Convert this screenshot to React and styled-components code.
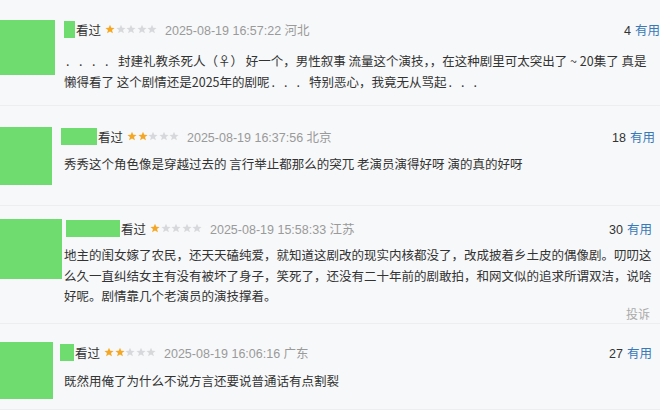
import React from 'react';
import styled, { createGlobalStyle } from 'styled-components';

const GlobalStyle = createGlobalStyle`
  html, body {
    margin: 0;
    padding: 0;
    background: #f7f8f9;
  }
  body {
    width: 660px;
    height: 410px;
    overflow: hidden;
    font-family: "Liberation Sans", "Noto Sans CJK SC", sans-serif;
    color: #333;
  }
`;

const StyledList = styled.div`
  width: 660px;
  height: 410px;
  overflow: hidden;
`;

const StyledComment = styled.div`
  display: grid;
  grid-template-columns: 64px 1fr;
  height: ${({ $h }) => $h}px;
  padding-top: ${({ $top }) => $top}px;
  box-sizing: border-box;
  border-bottom: 1px solid #eceef0;
`;

const Avatar = styled.div`
  width: ${({ $w }) => $w}px;
  height: ${({ $h }) => $h}px;
  margin-top: ${({ $mt }) => $mt || 0}px;
  background: #6edc6e;
`;

const Content = styled.div`
  display: flex;
  flex-direction: column;
  gap: ${({ $gap }) => $gap}px;
  min-width: 0;
`;

const Header = styled.div`
  display: flex;
  align-items: center;
  height: 18px;
  font-size: 12.5px;
  margin-right: ${({ $mr }) => $mr}px;
  white-space: nowrap;
`;

const NameBlock = styled.span`
  display: block;
  width: ${({ $w }) => $w}px;
  height: 17px;
  margin-left: ${({ $ml }) => $ml || 0}px;
  background: #6edc6e;
`;

const Watched = styled.span`
  margin-left: 1px;
  color: #333;
`;

const Stars = styled.span`
  display: flex;
  gap: 0.5px;
  margin-left: 4px;
`;

const DateText = styled.span`
  margin-left: 8px;
  color: #9a9a9a;
`;

const Useful = styled.span`
  margin-left: auto;
  color: #333;

  b {
    font-weight: normal;
    color: #3a79b8;
    margin-left: 4px;
  }
`;

const Body = styled.div`
  font-family: "Noto Sans CJK SC", "Liberation Sans", sans-serif;
  font-size: 12.5px;
  line-height: 20.5px;
  color: #333;
`;

const Line = styled.div`
  white-space: nowrap;
`;

// wide-spaced ellipsis dots, as the source renders them
const Dots = styled.span`
  letter-spacing: ${({ $sp }) => $sp}px;
  padding-left: ${({ $pl }) => $pl || 0}px;
`;

const Report = styled.div`
  align-self: flex-end;
  margin-right: 10px;
  margin-top: -10px;
  font-size: 12px;
  color: #aaa;
`;

const Star = ({ on }) => (
  <svg width="10" height="10" viewBox="0 0 24 24">
    <polygon
      points="12,1.5 15,9 23,9.3 16.8,14.3 19,22.3 12,17.8 5,22.3 7.2,14.3 1,9.3 9,9"
      fill={on ? '#f5a623' : '#d6d8db'}
    />
  </svg>
);

const comments = [
  {
    h: 106, top: 20, gap: 13, mr: 0,
    avatar: { w: 55, h: 55 }, name: { w: 11 },
    stars: 1, date: '2025-08-19 16:57:22 河北', useful: 4,
    lines: [
      <>
        <Dots $sp={9.5} $pl={2}>....</Dots>
        封建礼教杀死人（♀） 好一个，男性叙事 流量这个演技，，在这种剧里可太突出了 ~ 20集了 真是
      </>,
      <>
        懒得看了 这个剧情还是2025年的剧呢<Dots $sp={9} $pl={2}>...</Dots>特别恶心，我竟无从骂起
        <Dots $sp={9} $pl={2}>...</Dots>
      </>,
    ],
  },
  {
    h: 100, top: 21, gap: 9, mr: 5,
    avatar: { w: 52, h: 58 }, name: { w: 36, ml: -3 },
    stars: 2, date: '2025-08-19 16:37:56 北京', useful: 18,
    lines: ['秀秀这个角色像是穿越过去的 言行举止都那么的突兀 老演员演得好呀 演的真的好呀'],
  },
  {
    h: 118, top: 13, gap: 8, mr: 8, report: true,
    avatar: { w: 62, h: 60 }, name: { w: 54, ml: 2 },
    stars: 1, date: '2025-08-19 15:58:33 江苏', useful: 30,
    lines: [
      '地主的闺女嫁了农民，还天天磕纯爱，就知道这剧改的现实内核都没了，改成披着乡土皮的偶像剧。叨叨这',
      '么久一直纠结女主有没有被坏了身子，笑死了，还没有二十年前的剧敢拍，和网文似的追求所谓双洁，说啥',
      '好呢。剧情靠几个老演员的演技撑着。',
    ],
  },
  {
    h: 86, top: 19, gap: 10, mr: 8,
    avatar: { w: 53, h: 57, mt: -1 }, name: { w: 14, ml: -4 },
    stars: 2, date: '2025-08-19 16:06:16 广东', useful: 27,
    lines: ['既然用俺了为什么不说方言还要说普通话有点割裂'],
  },
];

const Comment = ({ c }) => (
  <StyledComment $h={c.h} $top={c.top}>
    <Avatar $w={c.avatar.w} $h={c.avatar.h} $mt={c.avatar.mt} />
    <Content $gap={c.gap}>
      <Header $mr={c.mr}>
        <NameBlock $w={c.name.w} $ml={c.name.ml} />
        <Watched>看过</Watched>
        <Stars>
          {[0, 1, 2, 3, 4].map((i) => (
            <Star key={i} on={i < c.stars} />
          ))}
        </Stars>
        <DateText>{c.date}</DateText>
        <Useful>
          {c.useful}
          <b>有用</b>
        </Useful>
      </Header>
      <Body>
        {c.lines.map((l, i) => (
          <Line key={i}>{l}</Line>
        ))}
      </Body>
      {c.report && <Report>投诉</Report>}
    </Content>
  </StyledComment>
);

const App = () => (
  <>
    <GlobalStyle />
    <StyledList>
      {comments.map((c, i) => (
        <Comment key={i} c={c} />
      ))}
    </StyledList>
  </>
);

export default App;
